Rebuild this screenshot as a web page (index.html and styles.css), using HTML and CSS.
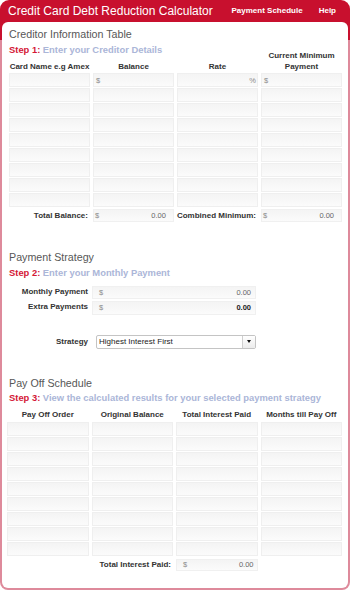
FILE: index.html
```html
<!DOCTYPE html>
<html>
<head>
<meta charset="utf-8">
<title>Credit Card Debt Reduction Calculator</title>
<link rel="stylesheet" href="styles.css">
</head>
<body>
<div class="app">
  <header class="topbar">
    <h1 class="brand">Credit Card Debt Reduction Calculator</h1>
    <nav class="nav"><a class="nav-link">Payment Schedule</a><a class="nav-link">Help</a></nav>
  </header>
  <main class="panel">
    <section class="sec sec-creditors">
      <h2 class="sec-title">Creditor Information Table</h2>
      <p class="step"><span class="step-num">Step 1:</span> Enter your Creditor Details</p>
      <div class="grid grid-creditors">
        <div class="th">Card Name e.g Amex</div>
        <div class="th">Balance</div>
        <div class="th">Rate</div>
        <div class="th">Current Minimum Payment</div>

        <div class="cell"></div>
        <div class="cell"><span class="sym">$</span></div>
        <div class="cell cell-right"><span class="sym">%</span></div>
        <div class="cell"><span class="sym">$</span></div>

        <div class="cell"></div><div class="cell"></div><div class="cell"></div><div class="cell"></div>
        <div class="cell"></div><div class="cell"></div><div class="cell"></div><div class="cell"></div>
        <div class="cell"></div><div class="cell"></div><div class="cell"></div><div class="cell"></div>
        <div class="cell"></div><div class="cell"></div><div class="cell"></div><div class="cell"></div>
        <div class="cell"></div><div class="cell"></div><div class="cell"></div><div class="cell"></div>
        <div class="cell"></div><div class="cell"></div><div class="cell"></div><div class="cell"></div>
        <div class="cell"></div><div class="cell"></div><div class="cell"></div><div class="cell"></div>
        <div class="cell"></div><div class="cell"></div><div class="cell"></div><div class="cell"></div>
      </div>
      <div class="grid grid-total">
        <div class="total-label">Total Balance:</div>
        <div class="field field-total"><span class="sym">$</span><span class="val">0.00</span></div>
        <div class="total-label">Combined Minimum:</div>
        <div class="field field-total"><span class="sym">$</span><span class="val">0.00</span></div>
      </div>
    </section>

    <section class="sec sec-strategy">
      <h2 class="sec-title">Payment Strategy</h2>
      <p class="step"><span class="step-num">Step 2:</span> Enter your Monthly Payment</p>
      <div class="form">
        <div class="form-label">Monthly Payment</div>
        <div class="field field-pay"><span class="sym">$</span><span class="val">0.00</span></div>
        <div class="form-label">Extra Payments</div>
        <div class="field field-pay"><span class="sym">$</span><span class="val val-strong">0.00</span></div>
      </div>
      <div class="form form-select">
        <div class="form-label">Strategy</div>
        <div class="select"><span class="select-text">Highest Interest First</span><span class="select-btn"><span class="caret"></span></span></div>
      </div>
    </section>

    <section class="sec sec-payoff">
      <h2 class="sec-title">Pay Off Schedule</h2>
      <p class="step"><span class="step-num">Step 3:</span> View the calculated results for your selected payment strategy</p>
      <div class="grid grid-payoff">
        <div class="th">Pay Off Order</div>
        <div class="th">Original Balance</div>
        <div class="th">Total Interest Paid</div>
        <div class="th">Months till Pay Off</div>

        <div class="cell"></div><div class="cell"></div><div class="cell"></div><div class="cell"></div>
        <div class="cell"></div><div class="cell"></div><div class="cell"></div><div class="cell"></div>
        <div class="cell"></div><div class="cell"></div><div class="cell"></div><div class="cell"></div>
        <div class="cell"></div><div class="cell"></div><div class="cell"></div><div class="cell"></div>
        <div class="cell"></div><div class="cell"></div><div class="cell"></div><div class="cell"></div>
        <div class="cell"></div><div class="cell"></div><div class="cell"></div><div class="cell"></div>
        <div class="cell"></div><div class="cell"></div><div class="cell"></div><div class="cell"></div>
        <div class="cell"></div><div class="cell"></div><div class="cell"></div><div class="cell"></div>
        <div class="cell"></div><div class="cell"></div><div class="cell"></div><div class="cell"></div>
      </div>
      <div class="grid grid-payoff-total">
        <div class="total-label total-wide">Total Interest Paid:</div>
        <div class="field field-interest"><span class="sym">$</span><span class="val">0.00</span></div>
      </div>
    </section>
  </main>
</div>
</body>
</html>
```

FILE: styles.css
```css
html, body {
  margin: 0;
  padding: 0;
  background: #fff;
}

body {
  font-family: "Liberation Sans", Arial, sans-serif;
}

.app {
  width: 350px;
  height: 590px;
  box-sizing: border-box;
  display: flex;
  flex-direction: column;
  padding: 0 2px 2px;
  border-radius: 9px 9px 8px 8px;
  background: linear-gradient(#c8102e 0, #c8102e 40px, #de8a9b 40px, #de8a9b 100%);
  overflow: hidden;
}

/* ---------- top bar ---------- */
.topbar {
  height: 22px;
  display: flex;
  justify-content: space-between;
  padding: 0 12px 0 6px;
}

.brand {
  margin: 0;
  font-size: 12px;
  line-height: 22px;
  font-weight: normal;
  color: #fff;
  white-space: nowrap;
}

.nav {
  display: flex;
  gap: 16px;
}

.nav-link {
  font-size: 8px;
  line-height: 22px;
  font-weight: bold;
  color: #fff;
  white-space: nowrap;
}

/* ---------- panel ---------- */
.panel {
  flex: 1;
  background: #fff;
  border-radius: 6px 6px 6px 6px;
  padding: 6px 6px 0 7px;
}

.sec-title {
  margin: 0;
  font-size: 10.7px;
  line-height: 13px;
  font-weight: normal;
  color: #575757;
  white-space: nowrap;
}

.step {
  margin: 3px 0 0;
  font-size: 9.4px;
  line-height: 12px;
  font-weight: bold;
  color: #abb6d8;
  white-space: nowrap;
}

.step-num {
  color: #d41736;
}

/* ---------- grids ---------- */
.grid {
  display: grid;
  grid-template-columns: repeat(4, 1fr);
  column-gap: 3px;
}

.grid-creditors {
  margin-top: -5px;
  row-gap: 1px;
  grid-auto-rows: 14px;
  grid-template-rows: 21px;
}

.th {
  align-self: end;
  text-align: center;
  font-size: 8px;
  line-height: 10.5px;
  font-weight: bold;
  color: #333;
}

.cell {
  box-sizing: border-box;
  display: flex;
  align-items: center;
  padding: 0 2px;
  border: 1px solid #efefef;
  background: linear-gradient(#f4f4f4, #fbfbfb);
}

.cell-right {
  justify-content: flex-end;
  padding-right: 1px;
}

.sym {
  font-size: 7.5px;
  color: #8a8a8a;
}

.val {
  font-size: 7.5px;
  color: #666;
}

.val-strong {
  color: #222;
  font-weight: bold;
}

.grid-total {
  margin-top: 2px;
  height: 13px;
}

.total-label {
  text-align: right;
  font-size: 8px;
  line-height: 13px;
  font-weight: bold;
  color: #333;
  white-space: nowrap;
  padding-right: 2px;
}

.field {
  box-sizing: border-box;
  display: flex;
  justify-content: space-between;
  align-items: center;
  border: 1px solid #f0f0f0;
  background: linear-gradient(#f4f4f4, #fbfbfb);
}

.field-total {
  padding: 0 7px 0 1px;
}

/* ---------- strategy ---------- */
.sec-strategy {
  margin-top: 29px;
}

.step + .form {
  margin-top: 6.5px;
}

.form {
  display: grid;
  grid-template-columns: 79px 164px;
  column-gap: 4px;
  row-gap: 2px;
  grid-auto-rows: 13.5px;
}

.form-label {
  text-align: right;
  font-size: 8px;
  line-height: 12px;
  font-weight: bold;
  color: #333;
  white-space: nowrap;
}

.field-pay {
  padding: 0 4px 0 6px;
}

.form-select {
  margin-top: 20px;
  grid-auto-rows: 14px;
}

.form-select .form-label {
  line-height: 14px;
}

.select {
  margin-left: 4px;
  box-sizing: border-box;
  display: flex;
  align-items: stretch;
  border: 1px solid #c4c4c4;
  border-radius: 2px;
  background: #fff;
}

.select-text {
  flex: 1;
  padding-left: 2px;
  font-size: 8px;
  line-height: 12px;
  color: #222;
  white-space: nowrap;
}

.select-btn {
  width: 12px;
  border-left: 1px solid #cfcfcf;
  background: linear-gradient(#fff, #ececec);
  display: flex;
  align-items: center;
  justify-content: center;
}

.caret {
  width: 0;
  height: 0;
  border-left: 2px solid transparent;
  border-right: 2px solid transparent;
  border-top: 3px solid #111;
}

/* ---------- payoff ---------- */
.sec-payoff {
  margin-top: 28px;
}

.sec-payoff .step {
  margin-top: 2px;
}

.grid-payoff {
  margin: 6.5px 0 0 -2px;
  row-gap: 1px;
  grid-auto-rows: 14px;
  grid-template-rows: 10.5px;
}

.grid-payoff .th {
  margin-bottom: 0.5px;
}

.grid-payoff-total {
  margin: 3px 0 0 -2px;
  height: 12.5px;
}

.total-wide {
  grid-column: 1 / 3;
  line-height: 12.5px;
}

.field-interest {
  grid-column: 3;
  padding: 0 3px 0 6px;
}
```
